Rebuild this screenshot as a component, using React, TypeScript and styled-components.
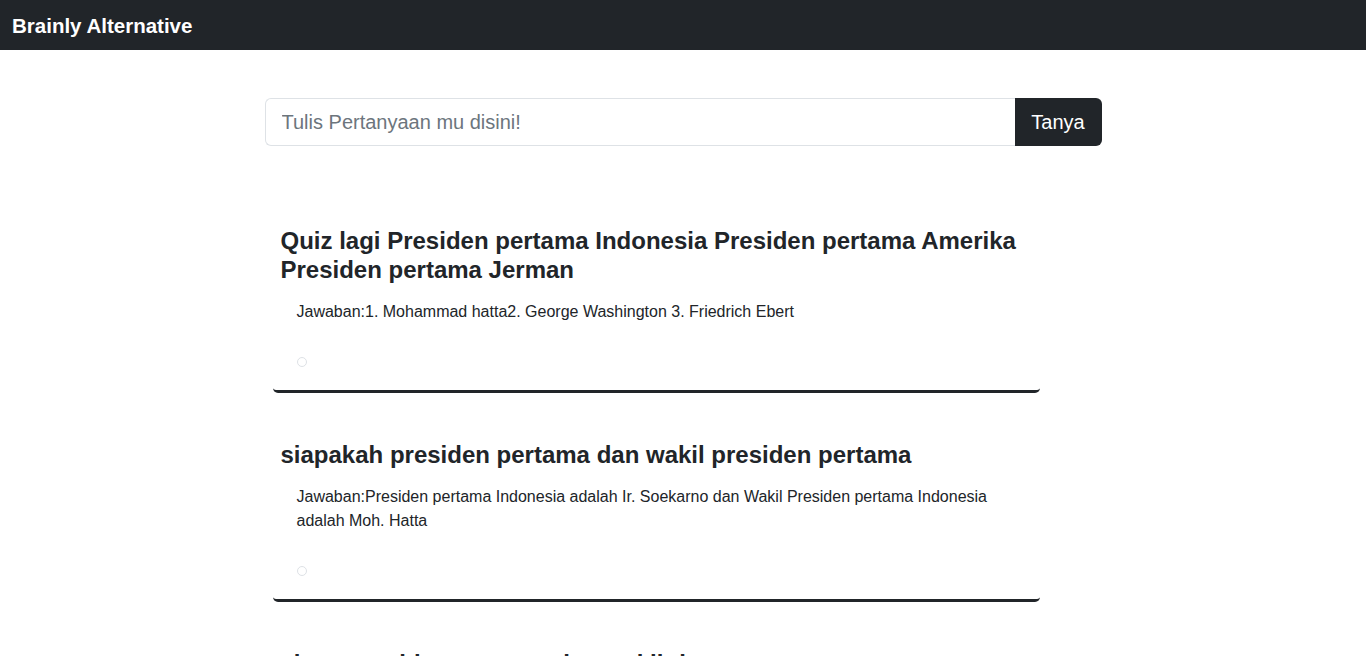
import React from "react";
import styled, { createGlobalStyle } from "styled-components";

const GlobalStyle = createGlobalStyle`
  * { box-sizing: border-box; }
  html, body { margin: 0; padding: 0; background: #fff; }
  body {
    font-family: "Liberation Sans", Arial, sans-serif;
    color: #212529;
    font-size: 16px;
    line-height: 1.5;
  }
`;

const NavBar = styled.nav`
  height: 50px;
  background: #212529;
  display: flex;
  align-items: center;
  padding: 1px 12px 0;
`;

const Brand = styled.a`
  color: #fff;
  font-size: 20.5px;
  font-weight: 700;
  text-decoration: none;
  line-height: 30px;
`;

const Main = styled.main`
  width: 837px;
  margin: 48px auto 0;
`;

const SearchForm = styled.form`
  display: flex;
  height: 48px;
`;

const SearchInput = styled.input`
  flex: 1;
  min-width: 0;
  height: 48px;
  border: 1px solid #dee2e6;
  border-right: none;
  border-radius: 6px 0 0 6px;
  padding: 0 16px;
  font-family: inherit;
  font-size: 20px;
  color: #212529;
  outline: none;
  &::placeholder { color: #6c757d; }
`;

const SearchButton = styled.button`
  width: 87px;
  height: 48px;
  border: none;
  border-radius: 0 6px 6px 0;
  background: #212529;
  color: #fff;
  font-family: inherit;
  font-size: 20px;
  padding: 0 16px;
  cursor: pointer;
`;

const List = styled.section`
  margin-top: 72px;
  padding-left: 8px;
  width: 775px;
`;

const Card = styled.article`
  padding: 8px 8px 0;
  border-bottom: 3px solid #212529;
  border-radius: 5px;
  margin-bottom: 39px;
`;

const Title = styled.h3`
  margin: 0 0 16px;
  font-size: 24px;
  line-height: 29px;
  font-weight: 700;
  color: #212529;
`;

const Answer = styled.p`
  margin: 0;
  padding-left: 16px;
  font-size: 16px;
  line-height: 24px;
`;

const Dot = styled.span`
  display: block;
  width: 10px;
  height: 10px;
  margin: 33px 0 23px 16px;
  border: 1px solid #dee2e6;
  border-radius: 50%;
`;

const items = [
  {
    q: "Quiz lagi Presiden pertama Indonesia Presiden pertama Amerika Presiden pertama Jerman",
    a: "Jawaban:1. Mohammad hatta2. George Washington 3. Friedrich Ebert",
  },
  {
    q: "siapakah presiden pertama dan wakil presiden pertama",
    a: "Jawaban:Presiden pertama Indonesia adalah Ir. Soekarno dan Wakil Presiden pertama Indonesia adalah Moh. Hatta",
  },
  {
    q: "siapa presiden pertama dan wakil ri",
    a: "Jawaban:Presiden pertama Indonesia adalah Ir. Soekarno dan wakil presiden pertama Indonesia adalah Moh. Hatta",
  },
];

export default function App() {
  return (
    <>
      <GlobalStyle />
      <NavBar>
        <Brand href="#">Brainly Alternative</Brand>
      </NavBar>
      <Main>
        <SearchForm onSubmit={(e) => e.preventDefault()}>
          <SearchInput type="text" placeholder="Tulis Pertanyaan mu disini!" />
          <SearchButton type="submit">Tanya</SearchButton>
        </SearchForm>
        <List>
          {items.map((it, i) => (
            <Card key={i}>
              <Title>{it.q}</Title>
              <Answer>{it.a}</Answer>
              <Dot />
            </Card>
          ))}
        </List>
      </Main>
    </>
  );
}
